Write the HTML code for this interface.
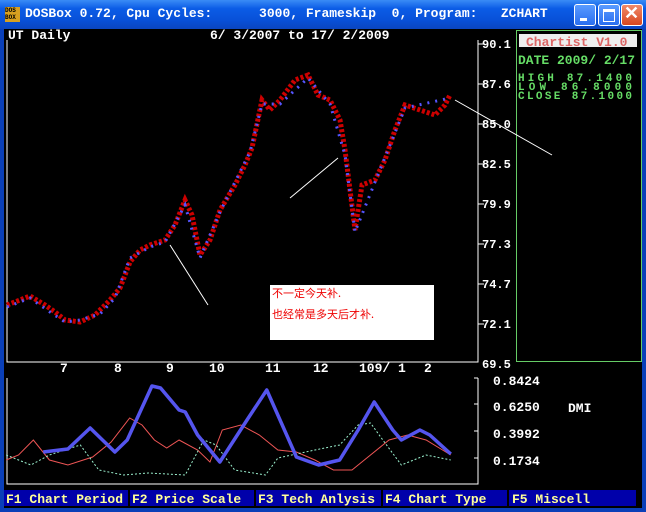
<!DOCTYPE html>
<html><head><meta charset="utf-8"><style>
body{margin:0;width:646px;height:512px;overflow:hidden;background:#0a3fb8;}
#t{position:absolute;left:0;top:0;width:646px;height:29px;background:linear-gradient(#3a8cf6,#0b5ce6 30%,#0850d8 70%,#0a45c0);}
#c{position:absolute;left:4px;top:29px;width:638px;height:479px;background:#000;}
.tt{position:absolute;left:25px;top:6px;color:#fff;font:bold 13px "Liberation Mono",monospace;white-space:pre;}
.b{position:absolute;top:4px;width:20px;height:20px;border:1px solid #fff;border-radius:3px;background:linear-gradient(#5a9bff,#2a6ef0);}
svg text{font-family:"Liberation Mono",monospace;font-weight:bold;}
</style></head><body>
<div id="t">
<div style="position:absolute;left:5px;top:7px;width:15px;height:15px;background:#d8a020;font:bold 6px 'Liberation Mono';color:#000;line-height:7px;">DOS<br>BOX</div>
<div class="tt">DOSBox 0.72, Cpu Cycles:      3000, Frameskip  0, Program:   ZCHART</div>
<div class="b" style="left:574px"><div style="position:absolute;left:5px;top:13px;width:7px;height:3px;background:#fff"></div></div>
<div class="b" style="left:598px"><div style="position:absolute;left:4px;top:4px;width:10px;height:9px;border:1px solid #fff;border-top-width:3px"></div></div>
<div class="b" style="left:621px;background:linear-gradient(#f08a6a,#d8461e)"><div style="position:absolute;left:2px;top:-2px;color:#fff;font:bold 18px 'Liberation Sans'">✕</div></div>
</div>
<div id="c"></div>
<svg width="646" height="512" style="position:absolute;left:0;top:0">
<g fill="#fff" font-size="13">
<text x="8" y="39">UT Daily</text>
<text x="210" y="39">6/ 3/2007 to 17/ 2/2009</text>
<g font-size="12"><text x="482" y="48">90.1</text><text x="482" y="88">87.6</text><text x="482" y="128">85.0</text><text x="482" y="168">82.5</text><text x="482" y="208">79.9</text><text x="482" y="248">77.3</text><text x="482" y="288">74.7</text><text x="482" y="328">72.1</text><text x="482" y="368">69.5</text></g>
<text x="60" y="372">7</text><text x="114" y="372">8</text><text x="166" y="372">9</text><text x="209" y="372">10</text><text x="265" y="372">11</text><text x="313" y="372">12</text><text x="359" y="372">109/ 1</text><text x="424" y="372">2</text>
<text x="493" y="385">0.8424</text><text x="493" y="411">0.6250</text><text x="493" y="438">0.3992</text><text x="493" y="465">0.1734</text>
<text x="568" y="412">DMI</text>
</g>
<path d="M7 40V362H478V40" fill="none" stroke="#fff"/>
<path d="M7 378V484H478V378" fill="none" stroke="#fff"/>
<g stroke="#fff"><path d="M478 44h6M478 84h6M478 124h6M478 164h6M478 204h6M478 244h6M478 284h6M478 324h6M478 378h-4M478 404h-4M478 431h-4M478 458h-4"/></g>
<rect x="516.5" y="30.5" width="125" height="331" fill="none" stroke="#6c6"/>
<rect x="519" y="34" width="118" height="13" fill="#eee"/>
<g font-size="13"><text x="526" y="46" fill="#d66">Chartist V1.0</text>
<g fill="#6d6"><text x="518" y="64">DATE 2009/ 2/17</text>
<g font-size="11"><text x="518" y="81" textLength="114">HIGH   87.1400</text><text x="518" y="90" textLength="114">LOW    86.8000</text><text x="518" y="99" textLength="114">CLOSE  87.1000</text></g></g></g>
<polyline points="7,305 20,300 30,296 45,305 55,312 65,320 80,322 95,315 110,300 120,288 130,262 140,250 150,245 165,240 175,225 185,200 192,215 200,255 210,240 220,210 235,185 245,165 252,148 262,100 270,110 280,100 295,80 308,75 318,95 330,100 340,120 345,150 350,190 355,230 362,185 375,180 385,160 395,130 405,105 420,110 435,115 445,105 450,95" fill="none" stroke="#c00" stroke-width="5" stroke-dasharray="3 2"/>
<polyline points="7,307 30,298 50,312 65,322 80,320 100,314 115,298 130,258 150,247 165,242 185,205 200,258 220,212 250,152 262,104 280,104 308,78 330,104 345,155 355,232 375,182 405,108 450,98" fill="none" stroke="#55f" stroke-width="3" stroke-dasharray="2 6"/>
<g stroke="#fff"><line x1="170" y1="245" x2="208" y2="305"/><line x1="290" y1="198" x2="338" y2="158"/><line x1="455" y1="100" x2="552" y2="155"/></g>
<rect x="270" y="285" width="164" height="55" fill="#fff"/>
<text x="272" y="297" fill="#e00" font-size="11" style="font-family:'Noto Sans CJK SC',sans-serif;font-weight:normal">不一定今天补.</text>
<text x="272" y="318" fill="#e00" font-size="11" style="font-family:'Noto Sans CJK SC',sans-serif;font-weight:normal">也经常是多天后才补.</text>
<g transform="scale(1.235 1)">
<polyline points="5,460 15,455 27,440 40,460 55,465 75,457 90,442 105,418 115,425 125,440 135,448 145,440 160,450 170,462 180,430 195,425 210,435 225,450 240,452 255,460 270,470 285,470 300,455 315,440 330,435 345,440 365,455" fill="none" stroke="#e55" stroke-width="1" vector-effect="non-scaling-stroke"/>
<polyline points="5,455 25,465 40,455 65,445 80,470 100,475 120,473 150,475 165,440 175,445 190,470 215,475 225,458 255,450 275,445 290,425 300,423 310,440 325,465 345,455 365,460" fill="none" stroke="#9ec" stroke-width="1" stroke-dasharray="2 2" vector-effect="non-scaling-stroke"/>
<polyline points="35,452 55,449 73,428 93,452 103,440 123,386 130,388 145,410 150,412 160,435 178,462 200,420 216,390 240,457 258,465 275,460 290,430 303,402 318,430 325,440 340,430 348,435 365,454" fill="none" stroke="#55e" stroke-width="3.5" stroke-linejoin="round" vector-effect="non-scaling-stroke"/>
</g>
<rect x="4" y="490" width="632" height="16" fill="#0000aa"/>
<g fill="#ffff99" font-size="13"><text x="6" y="503">F1 Chart Period</text><text x="132" y="503">F2 Price Scale</text><text x="258" y="503">F3 Tech Anlysis</text><text x="385" y="503">F4 Chart Type</text><text x="512" y="503">F5 Miscell</text></g>
<g fill="#000"><rect x="128" y="490" width="2" height="16"/><rect x="254" y="490" width="2" height="16"/><rect x="381" y="490" width="2" height="16"/><rect x="507" y="490" width="2" height="16"/></g>
</svg>
</body></html>
